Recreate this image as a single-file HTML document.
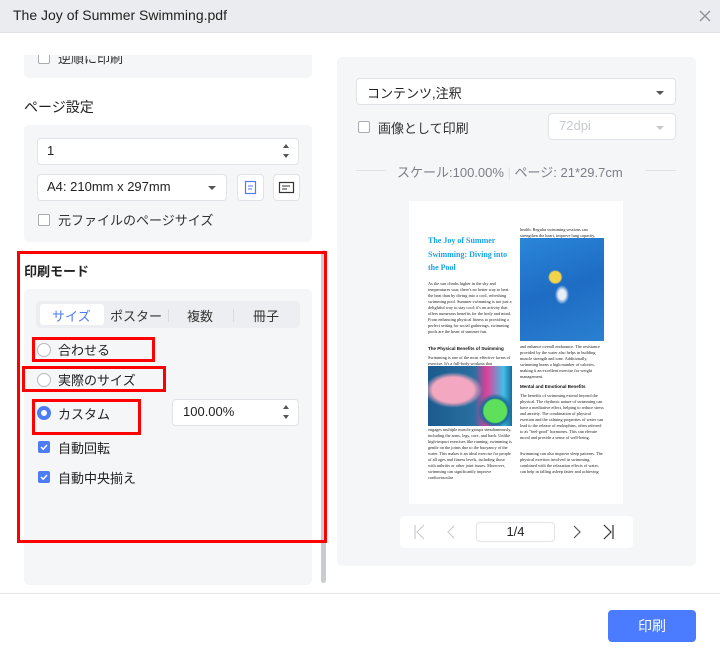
<!DOCTYPE html>
<html><head><meta charset="utf-8"><style>
*{box-sizing:border-box;margin:0;padding:0}
body{width:720px;height:660px;background:#fff;font-family:"Liberation Sans","Noto Sans CJK JP",sans-serif;color:#222;position:relative;overflow:hidden;font-size:13px}
.a{position:absolute}
.card{background:#f5f6f8;border-radius:5px}
.inp{background:#fff;border:1px solid #e1e3e8;border-radius:4px}
.cb{width:12px;height:12px;border:1px solid #a8acb3;border-radius:2px;background:#fff}
.cbk{width:12px;height:12px;border-radius:2px;background:#4d7cf6}
.rd{width:14px;height:14px;border:1px solid #b6bac1;border-radius:50%;background:#fff}
.red{border:3px solid #f00}
.tri{width:0;height:0;border-left:4px solid transparent;border-right:4px solid transparent;border-top:4px solid #555}
.pt{font-family:"Liberation Serif",serif;font-size:4.3px;line-height:6px;color:#222}
</style></head><body>
<div class="a" style="left:0;top:0;width:720px;height:33px;background:#eaecef;border-bottom:1px solid #e0e2e6"></div>
<div class="a" style="left:13px;top:7px;font-size:14px;color:#222">The Joy of Summer Swimming.pdf</div>
<svg class="a" style="left:698px;top:9px" width="14" height="14"><path d="M2 2L12 12M12 2L2 12" stroke="#8a8f97" stroke-width="1.3"/></svg>

<div class="a card" style="left:24px;top:40px;width:288px;height:38px"></div>
<div class="a cb" style="left:38px;top:52px"></div>
<div class="a" style="left:58px;top:48px;font-size:13px;color:#333;clip-path:inset(8px 0 0 0)">逆順に印刷</div>
<div class="a" style="left:0;top:33px;width:330px;height:22px;background:#fff"></div>

<div class="a" style="left:24px;top:97px;font-size:14px;color:#222">ページ設定</div>
<div class="a card" style="left:24px;top:125px;width:288px;height:117px"></div>
<div class="a inp" style="left:37px;top:138px;width:262px;height:27px"></div>
<div class="a" style="left:47px;top:143px;font-size:13px">1</div>
<svg class="a" style="left:282px;top:143px" width="8" height="16"><path d="M1 5L4 1L7 5ZM1 11L4 15L7 11Z" fill="#555"/></svg>
<div class="a inp" style="left:37px;top:174px;width:190px;height:27px"></div>
<div class="a" style="left:47px;top:179px;font-size:13px">A4: 210mm x 297mm</div>
<div class="a tri" style="left:208px;top:186px"></div>
<div class="a inp" style="left:237px;top:174px;width:27px;height:27px"></div>
<svg class="a" style="left:237px;top:174px" width="27" height="27"><rect x="8.5" y="7.5" width="10" height="12" fill="none" stroke="#4d7cf6" stroke-width="1.2"/><path d="M11 12h5M11 15h4" stroke="#4d7cf6" stroke-width="1.1"/></svg>
<div class="a inp" style="left:273px;top:174px;width:27px;height:27px"></div>
<svg class="a" style="left:273px;top:174px" width="27" height="27"><rect x="6.5" y="8.5" width="14" height="10" fill="none" stroke="#333" stroke-width="1.2"/><path d="M9 12h8M9 15h5" stroke="#333" stroke-width="1.1"/></svg>
<div class="a cb" style="left:38px;top:214px"></div>
<div class="a" style="left:58px;top:210px;font-size:13px;color:#333">元ファイルのページサイズ</div>

<div class="a" style="left:321px;top:250px;width:5px;height:333px;background:#c9cdd3;border-radius:3px"></div>
<div class="a" style="left:24px;top:261px;font-size:13px;font-weight:bold;color:#222">印刷モード</div>
<div class="a card" style="left:24px;top:289px;width:288px;height:296px"></div>
<div class="a" style="left:36px;top:301px;width:264px;height:27px;background:#eceef1;border-radius:4px"></div>
<div class="a" style="left:40px;top:304px;width:64px;height:21px;background:#fff;border-radius:3px"></div>
<div class="a" style="left:52px;top:306px;font-size:13px;color:#4d7cf6">サイズ</div>
<div class="a" style="left:110px;top:306px;font-size:13px;color:#333">ポスター</div>
<div class="a" style="left:168px;top:309px;width:1px;height:13px;background:#d8dbe0"></div>
<div class="a" style="left:187px;top:306px;font-size:13px;color:#333">複数</div>
<div class="a" style="left:233px;top:309px;width:1px;height:13px;background:#d8dbe0"></div>
<div class="a" style="left:253px;top:306px;font-size:13px;color:#333">冊子</div>

<div class="a rd" style="left:37px;top:343px"></div>
<div class="a" style="left:58px;top:340px;font-size:13px">合わせる</div>
<div class="a rd" style="left:37px;top:373px"></div>
<div class="a" style="left:58px;top:370px;font-size:13px">実際のサイズ</div>
<div class="a rd" style="left:37px;top:406px;border:4px solid #4d7cf6"></div>
<div class="a" style="left:58px;top:404px;font-size:13px">カスタム</div>
<div class="a inp" style="left:172px;top:399px;width:127px;height:27px"></div>
<div class="a" style="left:183px;top:404px;font-size:13px">100.00%</div>
<svg class="a" style="left:282px;top:404px" width="8" height="16"><path d="M1 5L4 1L7 5ZM1 11L4 15L7 11Z" fill="#555"/></svg>
<div class="a cbk" style="left:38px;top:441px"></div>
<svg class="a" style="left:38px;top:441px" width="12" height="12"><path d="M3 6L5.2 8.2L9 4" stroke="#fff" stroke-width="1.5" fill="none"/></svg>
<div class="a" style="left:58px;top:438px;font-size:13px">自動回転</div>
<div class="a cbk" style="left:38px;top:471px"></div>
<svg class="a" style="left:38px;top:471px" width="12" height="12"><path d="M3 6L5.2 8.2L9 4" stroke="#fff" stroke-width="1.5" fill="none"/></svg>
<div class="a" style="left:58px;top:468px;font-size:13px">自動中央揃え</div>

<div class="a red" style="left:17px;top:251px;width:310px;height:292px"></div>
<div class="a red" style="left:32px;top:337px;width:123px;height:25px"></div>
<div class="a red" style="left:22px;top:366px;width:144px;height:26px"></div>
<div class="a red" style="left:32px;top:399px;width:109px;height:36px"></div>

<div class="a card" style="left:337px;top:57px;width:359px;height:509px"></div>
<div class="a inp" style="left:356px;top:78px;width:320px;height:27px"></div>
<div class="a" style="left:367px;top:83px;font-size:13px">コンテンツ,注釈</div>
<div class="a tri" style="left:656px;top:91px"></div>
<div class="a cb" style="left:358px;top:121px"></div>
<div class="a" style="left:378px;top:118px;font-size:13px;color:#333">画像として印刷</div>
<div class="a inp" style="left:548px;top:113px;width:128px;height:27px"></div>
<div class="a" style="left:559px;top:118px;font-size:13px;color:#c6c9ce">72dpi</div>
<div class="a tri" style="left:656px;top:126px;border-top-color:#c6c9ce"></div>
<div class="a" style="left:356px;top:170px;width:30px;height:1px;background:#e1e3e8"></div>
<div class="a" style="left:645px;top:170px;width:31px;height:1px;background:#e1e3e8"></div>
<div class="a" style="left:397px;top:162px;font-size:13px;color:#7a7f87">スケール:100.00% <span style="color:#dcdfe3">|</span> ページ: 21*29.7cm</div>

<div class="a" style="left:409px;top:201px;width:214px;height:303px;background:#fff"></div>
<div class="a" style="left:428px;top:234px;width:86px;font-family:'Liberation Serif',serif;font-weight:bold;font-size:8px;line-height:13.5px;color:#1aa3e8">The Joy of Summer Swimming: Diving into the Pool</div>
<div class="a pt" style="left:428px;top:281px;width:84px">As the sun climbs higher in the sky and temperatures soar, there's no better way to beat the heat than by diving into a cool, refreshing swimming pool. Summer swimming is not just a delightful way to stay cool; it's an activity that offers numerous benefits for the body and mind. From enhancing physical fitness to providing a perfect setting for social gatherings, swimming pools are the heart of summer fun.</div>
<div class="a" style="left:428px;top:346px;font-size:4.5px;font-weight:bold;color:#111">The Physical Benefits of Swimming</div>
<div class="a pt" style="left:428px;top:355px;width:84px">Swimming is one of the most effective forms of exercise. It's a full-body workout that</div>
<div class="a" style="left:428px;top:366px;width:84px;height:60px;background:radial-gradient(ellipse at 30% 40%,#f4a7c0 0 25%,transparent 35%),radial-gradient(circle at 80% 75%,#5ee05a 0 14%,#1a6b9b 16%,transparent 22%),linear-gradient(90deg,#1b5a8e 0%,#2a6fa0 55%,#e0409a 70%,#3fc0e8 90%,#1a6b9b 100%)"></div>
<div class="a pt" style="left:428px;top:427px;width:84px">engages multiple muscle groups simultaneously, including the arms, legs, core, and back. Unlike high-impact exercises like running, swimming is gentle on the joints due to the buoyancy of the water. This makes it an ideal exercise for people of all ages and fitness levels, including those with arthritis or other joint issues. Moreover, swimming can significantly improve cardiovascular</div>
<div class="a pt" style="left:520px;top:227px;width:84px">health. Regular swimming sessions can strengthen the heart, improve lung capacity,</div>
<div class="a" style="left:520px;top:238px;width:84px;height:103px;background:radial-gradient(ellipse at 50% 55%,#e8eef5 0 6%,transparent 12%),radial-gradient(circle at 42% 38%,#f2d34a 0 7%,transparent 9%),linear-gradient(160deg,#2a86d8 0%,#1e6cc4 50%,#2a80d0 100%)"></div>
<div class="a pt" style="left:520px;top:344px;width:84px">and enhance overall endurance. The resistance provided by the water also helps in building muscle strength and tone. Additionally, swimming burns a high number of calories, making it an excellent exercise for weight management.</div>
<div class="a" style="left:520px;top:384px;font-size:4.5px;font-weight:bold;color:#111">Mental and Emotional Benefits</div>
<div class="a pt" style="left:520px;top:393px;width:84px">The benefits of swimming extend beyond the physical. The rhythmic nature of swimming can have a meditative effect, helping to reduce stress and anxiety. The combination of physical exertion and the calming properties of water can lead to the release of endorphins, often referred to as "feel-good" hormones. This can elevate mood and provide a sense of well-being.</div>
<div class="a pt" style="left:520px;top:451px;width:84px">Swimming can also improve sleep patterns. The physical exertion involved in swimming, combined with the relaxation effects of water, can help in falling asleep faster and achieving</div>

<div class="a" style="left:400px;top:516px;width:233px;height:32px;background:#fff;border-radius:4px"></div>
<svg class="a" style="left:412px;top:522px" width="220" height="20"><path d="M3 3V17M12 3L5 10L12 17" stroke="#c9ccd1" stroke-width="1.2" fill="none"/><path d="M42 4L36 10L42 16" stroke="#c9ccd1" stroke-width="1.2" fill="none"/><path d="M162 4L168 10L162 16" stroke="#555" stroke-width="1.2" fill="none"/><path d="M192 3L199 10L192 17M201 3V17" stroke="#333" stroke-width="1.2" fill="none"/></svg>
<div class="a inp" style="left:476px;top:522px;width:79px;height:20px;text-align:center;font-size:13px;line-height:18px">1/4</div>

<div class="a" style="left:0;top:593px;width:720px;height:1px;background:#e3e5e8"></div>
<div class="a" style="left:608px;top:610px;width:88px;height:32px;background:#4b7cff;border-radius:4px;color:#fff;font-size:14px;text-align:center;line-height:32px">印刷</div>
</body></html>
